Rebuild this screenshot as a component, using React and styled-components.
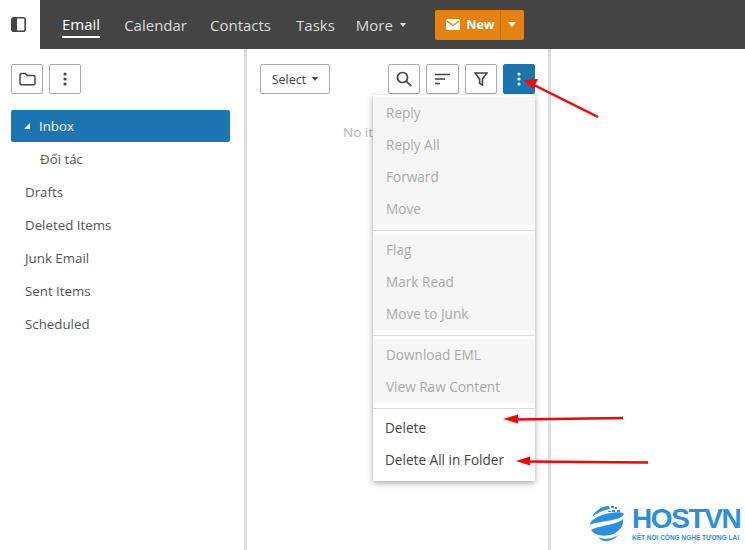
import styled, { createGlobalStyle } from "styled-components";

const GlobalStyle = createGlobalStyle`
  html, body {
    margin: 0;
    padding: 0;
    background: #fff;
    overflow: hidden;
  }
  * { box-sizing: border-box; }
`;

const Page = styled.div`
  position: relative;
  width: 745px;
  height: 550px;
  overflow: hidden;
  font-family: "Open Sans", "Noto Sans", sans-serif;
  color: #444;
`;

const TopBar = styled.div`
  display: flex;
  height: 49px;
`;

const ToggleCell = styled.div`
  width: 40px;
  display: flex;
  align-items: center;
  justify-content: center;
  padding-right: 4px;
`;

const NavBar = styled.div`
  flex: 1;
  display: flex;
  align-items: center;
  background: #444;
  padding-left: 22px;
`;

const NavItem = styled.div`
  height: 26px;
  margin-right: ${(p) => p.$gap}px;
  font-size: 15px;
  color: ${(p) => (p.$active ? "#fff" : "#ddd")};
  border-bottom: ${(p) => (p.$active ? "2px solid #fff" : "none")};
  display: flex;
  align-items: center;
  gap: 7px;
`;

const Caret = styled.span`
  width: 0;
  height: 0;
  border-left: ${(p) => p.$size || 3.5}px solid transparent;
  border-right: ${(p) => p.$size || 3.5}px solid transparent;
  border-top: ${(p) => (p.$size || 3.5) + 0.5}px solid ${(p) => p.$color || "#ddd"};
  display: inline-block;
`;

const NewButton = styled.div`
  display: flex;
  height: 30px;
  width: 89px;
  background: #e68310;
  border-radius: 2px;
  color: #fff;
  font-size: 12.5px;
  font-weight: 700;
`;

const NewLabel = styled.div`
  width: 66px;
  display: flex;
  align-items: center;
  justify-content: center;
  gap: 6px;
  padding-left: 6px;
  border-right: 1px solid #b96a0d;
`;

const NewArrow = styled.div`
  flex: 1;
  display: flex;
  align-items: center;
  justify-content: center;
`;

const Body = styled.div`
  display: flex;
  height: 501px;
`;

const Sidebar = styled.div`
  width: 247px;
  border-right: 3px solid #ddd;
  padding: 15px 14px 0 11px;
`;

const ToolRow = styled.div`
  display: flex;
  gap: 6px;
  margin-bottom: 16px;
`;

const IconButton = styled.div`
  width: ${(p) => p.$width || 32}px;
  height: 30px;
  border: 1px solid ${(p) => (p.$primary ? "#1a75b0" : "#aaa")};
  border-radius: 2px;
  background: ${(p) => (p.$primary ? "#1a75b0" : "#fff")};
  color: ${(p) => (p.$primary ? "#fff" : "#444")};
  display: flex;
  align-items: center;
  justify-content: center;
`;

const FolderRow = styled.div`
  height: ${(p) => (p.$active ? 32 : 33)}px;
  display: flex;
  align-items: center;
  font-size: 13.3px;
  padding-left: ${(p) => p.$indent}px;
  border-radius: 2px;
  color: ${(p) => (p.$active ? "#fff" : "#555")};
  background: ${(p) => (p.$active ? "#1a75b0" : "transparent")};
`;

const Expander = styled.span`
  width: 0;
  height: 0;
  margin-right: 9px;
  border-left: 6px solid transparent;
  border-bottom: 6px solid #fff;
`;

const ListPane = styled.div`
  width: 304px;
  border-right: 3px solid #ddd;
  padding: 15px 13px 0 13px;
`;

const ListTools = styled.div`
  display: flex;
  justify-content: space-between;
`;

const SelectButton = styled.div`
  width: 70px;
  height: 30px;
  border: 1px solid #aaa;
  border-radius: 2px;
  display: flex;
  align-items: center;
  justify-content: center;
  gap: 6px;
  font-size: 12.5px;
  color: #444;
`;

const ToolGroup = styled.div`
  display: flex;
  gap: 6px;
`;

const EmptyText = styled.div`
  margin: 29px 0 0 83px;
  font-size: 13.5px;
  color: #b5b5b5;
`;

const Menu = styled.div`
  position: absolute;
  left: 373px;
  top: 95px;
  width: 162px;
  height: 386px;
  background: #fff;
  padding: 2px 0;
  box-shadow: 0 2px 6px rgba(0, 0, 0, 0.35);
  font-size: 13.6px;
`;

const MenuGroup = styled.div`
  background: ${(p) => (p.$disabled ? "#f6f6f6" : "#fff")};
  color: ${(p) => (p.$disabled ? "#aaa" : "#444")};
`;

const MenuItem = styled.div`
  height: 32px;
  line-height: 32px;
  padding-left: ${(p) => (p.$disabled ? 13 : 12)}px;
  white-space: nowrap;
`;

const MenuDivider = styled.div`
  height: 1px;
  margin: 5px 0 3px;
  background: #dcdcdc;
`;

const Annotations = styled.svg`
  position: absolute;
  left: 0;
  top: 0;
  pointer-events: none;
`;

const Logo = styled.div`
  position: absolute;
  left: 589px;
  top: 505px;
  display: flex;
  gap: 7px;
  color: #2a8fe0;
`;

const LogoText = styled.div`
  display: flex;
  flex-direction: column;
`;

const LogoName = styled.div`
  font-family: "Liberation Sans", sans-serif;
  font-size: 28px;
  line-height: 28px;
  font-weight: 700;
  letter-spacing: -1.4px;
`;

const LogoTag = styled.div`
  font-family: "Liberation Sans", sans-serif;
  font-size: 6.5px;
  line-height: 9px;
  font-weight: 700;
  white-space: nowrap;
`;

function PanelIcon() {
  return (
    <svg width="15" height="15" viewBox="0 0 15 15">
      <rect x="0.8" y="0.8" width="13.4" height="13.4" rx="2" fill="#fff" stroke="#444" strokeWidth="1.6" />
      <path d="M1 3a2 2 0 0 1 2-2h3v13H3a2 2 0 0 1-2-2z" fill="#444" />
    </svg>
  );
}

function MailIcon() {
  return (
    <svg width="14" height="11" viewBox="0 0 14 11">
      <rect width="14" height="11" rx="1.5" fill="#fff" />
      <path d="M1 2l6 4.5L13 2" fill="none" stroke="#e68310" strokeWidth="1.2" />
    </svg>
  );
}

function FolderIcon() {
  return (
    <svg width="17" height="14" viewBox="0 0 17 14" fill="none" stroke="#444" strokeWidth="1.5">
      <path d="M1 3a1.5 1.5 0 0 1 1.5-1.5h3.7L8 3.5h6.5A1.5 1.5 0 0 1 16 5v6.5a1.2 1.2 0 0 1-1.2 1.2H2.2A1.2 1.2 0 0 1 1 11.5z" />
    </svg>
  );
}

function DotsIcon({ color = "#444" }) {
  return (
    <svg width="4" height="14" viewBox="0 0 4 14" fill={color}>
      <circle cx="2" cy="2" r="1.6" />
      <circle cx="2" cy="7" r="1.6" />
      <circle cx="2" cy="12" r="1.6" />
    </svg>
  );
}

function SearchIcon() {
  return (
    <svg width="16" height="16" viewBox="0 0 16 16" fill="none" stroke="#444" strokeWidth="1.7">
      <circle cx="6.5" cy="6.5" r="5" />
      <path d="M10.2 10.2l5 5" />
    </svg>
  );
}

function SortIcon() {
  return (
    <svg width="16" height="12" viewBox="0 0 16 12" stroke="#444" strokeWidth="1.6">
      <path d="M0 1.5h15M0 6h10M0 10.5h5" />
    </svg>
  );
}

function FunnelIcon() {
  return (
    <svg width="14" height="14" viewBox="0 0 14 14" fill="none" stroke="#444" strokeWidth="1.6">
      <path d="M1 1h12L8.4 7v6l-2.8-1.6V7z" />
    </svg>
  );
}

function HostLogoMark() {
  return (
    <svg width="36" height="36" viewBox="0 0 36 36" fill="#2a8fe0">
      <path d="M3 12C6 6 13 1 20 1l1 3C14 5 8 8 3 12z" />
      <path d="M22 1h3v2h-3zM26 2h2v2h-2zM23 5h3v2h-3zM28 5h3v2h-3zM19 6h3v1h-3z" />
      <path d="M1 20c0-5 9-10 20-12 6-1 12-1 14 1-1 3-6 5-12 6C14 17 6 17 1 20z" />
      <path d="M2 25c5-3 13-4 21-6 5-1 9-3 11-5 1 6-3 12-10 15-8 3-18 2-22-4z" />
      <path d="M9 32c6 3 15 2 20-2-3 4-8 6-13 6-3 0-5-2-7-4z" />
    </svg>
  );
}

const folders = [
  { name: "Đối tác", indent: 29 },
  { name: "Drafts", indent: 14 },
  { name: "Deleted Items", indent: 14 },
  { name: "Junk Email", indent: 14 },
  { name: "Sent Items", indent: 14 },
  { name: "Scheduled", indent: 14 },
];

const menuGroups = [
  { disabled: true, items: ["Reply", "Reply All", "Forward", "Move"] },
  { disabled: true, items: ["Flag", "Mark Read", "Move to Junk"] },
  { disabled: true, items: ["Download EML", "View Raw Content"] },
  { disabled: false, items: ["Delete", "Delete All in Folder"] },
];

function App() {
  return (
    <Page>
      <GlobalStyle />
      <TopBar>
        <ToggleCell>
          <PanelIcon />
        </ToggleCell>
        <NavBar>
          <NavItem $active $gap={24}>Email</NavItem>
          <NavItem $gap={23}>Calendar</NavItem>
          <NavItem $gap={25}>Contacts</NavItem>
          <NavItem $gap={21}>Tasks</NavItem>
          <NavItem $gap={29}>
            More <Caret />
          </NavItem>
          <NewButton>
            <NewLabel>
              <MailIcon />
              New
            </NewLabel>
            <NewArrow>
              <Caret $color="#fff" $size={4.5} />
            </NewArrow>
          </NewButton>
        </NavBar>
      </TopBar>
      <Body>
        <Sidebar>
          <ToolRow>
            <IconButton>
              <FolderIcon />
            </IconButton>
            <IconButton>
              <DotsIcon />
            </IconButton>
          </ToolRow>
          <FolderRow $active $indent={13}>
            <Expander />
            Inbox
          </FolderRow>
          {folders.map((folder) => (
            <FolderRow key={folder.name} $indent={folder.indent}>
              {folder.name}
            </FolderRow>
          ))}
        </Sidebar>
        <ListPane>
          <ListTools>
            <SelectButton>
              Select <Caret $color="#444" />
            </SelectButton>
            <ToolGroup>
              <IconButton>
                <SearchIcon />
              </IconButton>
              <IconButton $width={33}>
                <SortIcon />
              </IconButton>
              <IconButton>
                <FunnelIcon />
              </IconButton>
              <IconButton $primary>
                <DotsIcon color="#fff" />
              </IconButton>
            </ToolGroup>
          </ListTools>
          <EmptyText>No items</EmptyText>
        </ListPane>
      </Body>
      <Menu>
        {menuGroups.map((group, i) => (
          <div key={group.items[0]}>
            {i > 0 && <MenuDivider />}
            <MenuGroup $disabled={group.disabled}>
              {group.items.map((item) => (
                <MenuItem key={item} $disabled={group.disabled}>{item}</MenuItem>
              ))}
            </MenuGroup>
          </div>
        ))}
      </Menu>
      <Annotations width="745" height="550" viewBox="0 0 745 550">
        <g stroke="#f00" fill="#f00">
          <path d="M598 117L532 84" strokeWidth="2.4" />
          <path d="M524 80l14-1-5 10z" stroke="none" />
          <path d="M516 419.5L623 418" strokeWidth="2.6" />
          <path d="M503 419l15-4.5v9z" stroke="none" />
          <path d="M528 461.5L648 462.5" strokeWidth="2.6" />
          <path d="M516 461l14-4.5v9z" stroke="none" />
        </g>
      </Annotations>
      <Logo>
        <HostLogoMark />
        <LogoText>
          <LogoName>HOSTVN</LogoName>
          <LogoTag>KẾT NỐI CÔNG NGHỆ TƯƠNG LAI</LogoTag>
        </LogoText>
      </Logo>
    </Page>
  );
}

export default App;
